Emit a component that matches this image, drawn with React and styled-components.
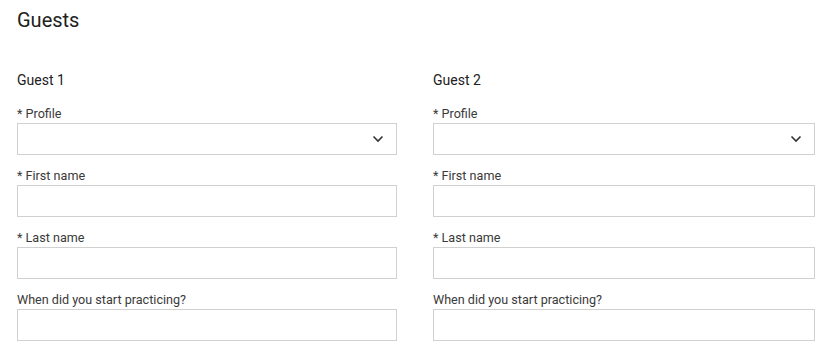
import React from 'react'
import styled, { createGlobalStyle } from 'styled-components'

const GlobalStyle = createGlobalStyle`
  body {
    margin: 0;
    background: #fff;
    font-family: Roboto, "Liberation Sans", sans-serif;
    color: #212121;
  }
`;

const guests = [
  { id: 1, title: 'Guest 1' },
  { id: 2, title: 'Guest 2' },
]

const fields = [
  { key: 'profile', label: '* Profile', select: true },
  { key: 'first', label: '* First name' },
  { key: 'last', label: '* Last name' },
  { key: 'since', label: 'When did you start practicing?' },
]

function Chevron() {
  return (
    <svg width="12" height="8" viewBox="0 0 12 8" fill="none">
      <path d="M1.5 1.5L6 6l4.5-4.5" stroke="#333" strokeWidth="1.6" />
    </svg>
  )
}

function GuestForm({ title }) {
  return (
    <Column>
      <GuestTitle>{title}</GuestTitle>
      {fields.map((f) => (
        <Field key={f.key}>
          <Label>{f.label}</Label>
          <InputBox>
            {f.select && <Chevron />}
          </InputBox>
        </Field>
      ))}
    </Column>
  )
}

export default function App() {
  return (
    <Page>
      <GlobalStyle />
      <Heading>Guests</Heading>
      <Columns>
        {guests.map((g) => (
          <GuestForm key={g.id} title={g.title} />
        ))}
      </Columns>
    </Page>
  )
}

const Page = styled.div`
  width: 833px;
  height: 354px;
  padding: 8px 18px 0 17px;
  box-sizing: border-box;
  overflow: hidden;
`;

const Heading = styled.h1`
  margin: 0;
  font-size: 20px;
  font-weight: 400;
  line-height: 24px;
  color: #212121;
`;

const Columns = styled.div`
  display: grid;
  grid-template-columns: 380px 382px;
  column-gap: 36px;
  margin-top: 39px;
`;

const Column = styled.div`
  display: flex;
  flex-direction: column;
`;

const GuestTitle = styled.h2`
  margin: 0 0 18px;
  font-size: 14px;
  font-weight: 400;
  line-height: 18px;
  color: #212121;
`;

const Field = styled.div`
  display: flex;
  flex-direction: column;
  margin-bottom: 14px;
`;

const Label = styled.label`
  font-size: 12.6px;
  line-height: 14px;
  color: #3a3a3a;
  margin-bottom: 2px;
`;

const InputBox = styled.div`
  height: 32px;
  box-sizing: border-box;
  border: 1px solid #d1d1d1;
  background: #fff;
  display: flex;
  align-items: center;
  justify-content: flex-end;
  padding-right: 12px;
`;
